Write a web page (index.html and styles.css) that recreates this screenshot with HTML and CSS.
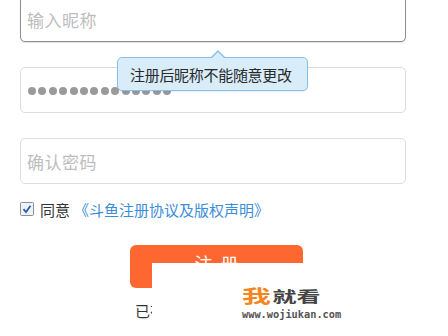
FILE: index.html
```html
<!DOCTYPE html>
<html lang="zh">
<head>
<meta charset="utf-8">
<link rel="stylesheet" href="styles.css">
</head>
<body>
<div class="page">
  <form class="form">
    <div class="field field-focus"><span class="ph">输入昵称</span></div>
    <div class="field"><span class="dots"><i></i><i></i><i></i><i></i><i></i><i></i><i></i><i></i><i></i><i></i><i></i><i></i><i></i><i></i></span></div>
    <div class="field"><span class="ph">确认密码</span></div>
    <div class="agree">
      <svg class="check" width="14" height="14" viewBox="0 0 14 14"><rect x="0.5" y="0.5" width="13" height="13" rx="1" fill="#eef3f8" stroke="#8a8f96"/><path d="M3.5 7.2 L6 10 L10.5 3.8" fill="none" stroke="#2b5ea8" stroke-width="1.8"/></svg>
      <span class="agree-text">同意</span>
      <a class="agree-link">《斗鱼注册协议及版权声明》</a>
    </div>
    <div class="btn-row"><button type="button" class="btn">注册</button></div>
    <div class="login-row"><span class="login">已有账号</span></div>
  </form>
  <div class="tip"><span class="tip-text">注册后昵称不能随意更改</span></div>
  <div class="mark">
    <div class="mark-title"><span class="wo">我</span><span class="jk">就看</span></div>
    <div class="mark-url">www.wojiukan.com</div>
  </div>
</div>
</body>
</html>
```
FILE: styles.css
```css
* { box-sizing: border-box; }
html, body { margin: 0; padding: 0; background: #fff; }
body { font-family: "Noto Sans CJK SC", "Noto Sans", sans-serif; width: 448px; height: 336px; overflow: hidden; }
.page { position: relative; width: 448px; height: 336px; overflow: hidden; }
.form { display: flex; flex-direction: column; padding-left: 20px; margin-top: -4px; }
.field {
  width: 386px; height: 46px; border: 1px solid #ddd; border-radius: 5px;
  display: flex; align-items: center; padding-left: 6px; margin-bottom: 25px; background: #fff;
}
.field-focus { border-color: #8e8e8e; box-shadow: 0 1px 1px rgba(0,0,0,0.12); }
.ph { font-size: 17px; color: #bdbdbd; letter-spacing: 0.5px; }
.dots { display: flex; gap: 2.4px; margin-left: 1px; margin-top: 2px; }
.dots i { width: 8px; height: 8px; border-radius: 50%; background: #9a9a9a; display: block; }
.agree { display: flex; align-items: center; margin-top: -13px; height: 26px; }
.check { display: block; }
.agree-text { font-size: 15px; color: #333; margin-left: 6px; }
.agree-link { font-size: 15px; color: #3c8ed6; margin-left: 4px; }
.btn-row { padding-left: 110px; margin-top: 23px; }
.btn {
  width: 173px; height: 43px; border: none; border-radius: 6px; background: #ff6731;
  color: #fff; font-family: inherit; font-size: 18px; line-height: 20px; letter-spacing: 8px; padding: 0 0 8px 8px;
  display: block;
}
.login-row { padding-left: 115px; margin-top: 13px; display: flex; }
.login { font-size: 15px; line-height: 20px; color: #333; }
.tip {
  position: absolute; left: 117px; top: 57px; width: 191px; height: 34px;
  background: #d9ecf9; border: 1px solid #86c0e8; border-radius: 5px;
  display: flex; align-items: center; padding-left: 12px;
  box-shadow: 0 1px 2px rgba(0,0,0,0.08);
}
.tip::before {
  content: ""; position: absolute; left: 92px; top: -8px; width: 0; height: 0;
  border-left: 8px solid transparent; border-right: 8px solid transparent; border-bottom: 8px solid #86c0e8;
}
.tip::after {
  content: ""; position: absolute; left: 93px; top: -6px; width: 0; height: 0;
  border-left: 7px solid transparent; border-right: 7px solid transparent; border-bottom: 7px solid #d9ecf9;
}
.tip-text { font-size: 15px; color: #2a2a2a; letter-spacing: -0.3px; }
.mark {
  position: absolute; left: 152px; top: 263px; width: 210px; height: 73px; background: #fff;
  padding: 22px 0 0 90px;
}
.mark-title {
  display: flex; align-items: center; height: 20px; line-height: 20px;
  transform: scaleX(1.6); transform-origin: left center;
}
.mark-title .wo { font-size: 18px; font-weight: bold; color: #f4861f; }
.mark-title .jk { font-size: 15px; font-weight: bold; color: #444; margin-left: 1px; margin-top: 2px; }
.mark-url { font-family: "DejaVu Sans Mono", monospace; font-size: 10.3px; line-height: 12px; font-weight: bold; color: #555; margin-top: 3px; }
```
